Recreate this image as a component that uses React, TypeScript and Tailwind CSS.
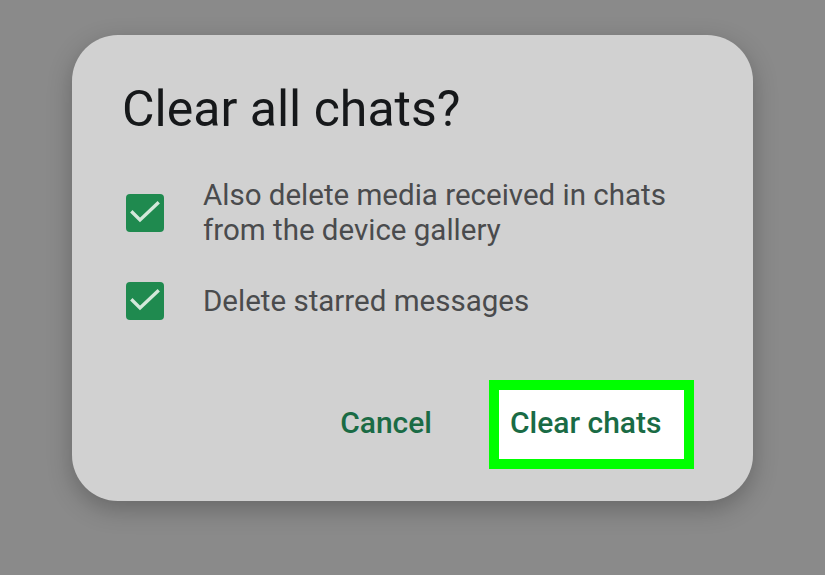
import React from "react";

const CheckBox = () => (
  <div className="w-[38px] h-[38px] rounded-[4px] bg-[#1f8a4f] shrink-0">
    <svg viewBox="0 0 38 38" className="w-[38px] h-[38px]" fill="none">
      <path d="M6.5 18.5l7.5 7.5L31.5 9.5" stroke="#d3e8da" strokeWidth="3.4" strokeLinecap="square" />
    </svg>
  </div>
);

export default function App() {
  return (
    <div className="w-[825px] h-[575px] bg-[#8a8a8a] pt-[35px] pl-[72px] font-['Roboto',sans-serif] overflow-hidden">
      <div className="w-[681px] h-[466px] bg-[#d1d1d1] rounded-[46px] shadow-[0_8px_24px_rgba(0,0,0,0.25)] flex flex-col">
        <h2 className="text-[#16181a] text-[50px] leading-none pl-[50px] pt-[49px]">Clear all chats?</h2>
        <div className="flex flex-col gap-[34px] pl-[54px] pt-[44px]">
          <div className="flex items-center gap-[39px]">
            <CheckBox />
            <p className="text-[#4a4b4d] text-[29.5px] leading-[35px]">
              Also delete media received in chats
              <br />
              from the device gallery
            </p>
          </div>
          <div className="flex items-center gap-[39px]">
            <CheckBox />
            <p className="text-[#4a4b4d] text-[29.5px] leading-[35px]">Delete starred messages</p>
          </div>
        </div>
        <div className="flex items-center justify-end mt-auto mb-[32px] mr-[59px]">
          <button className="text-[#1a6b45] text-[30px] font-medium mr-[57px] pb-[4px]">Cancel</button>
          <div className="w-[205px] h-[89px] border-[10px] border-[#00ff00] bg-white flex items-center pl-[11px] pb-[4px]">
            <span className="text-[#1a6b45] text-[30px] font-medium">Clear chats</span>
          </div>
        </div>
      </div>
    </div>
  );
}
